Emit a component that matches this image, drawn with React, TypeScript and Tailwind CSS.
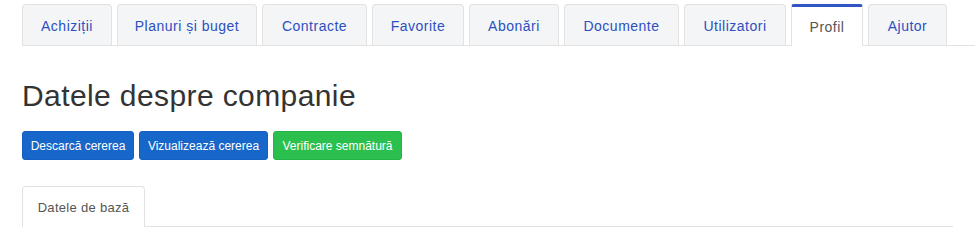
const tabs = [
  { label: "Achiziții", width: "w-[90px]" },
  { label: "Planuri și buget", width: "w-[140px]" },
  { label: "Contracte", width: "w-[105px]" },
  { label: "Favorite", width: "w-[92px]" },
  { label: "Abonări", width: "w-[90px]" },
  { label: "Documente", width: "w-[115px]" },
  { label: "Utilizatori", width: "w-[102px]" },
  { label: "Profil", width: "w-[72px]", active: true },
  { label: "Ajutor", width: "w-[79px]" },
];

export default function App() {
  return (
    <div className="h-[248px] w-[975px] overflow-hidden bg-white font-['Liberation_Sans',Arial,sans-serif]">
      <nav className="ml-[22px] mt-1 flex h-[42px] gap-[5px] border-b border-[#e2e2e2]">
        {tabs.map((tab) =>
          tab.active ? (
            <div
              key={tab.label}
              className={`${tab.width} -mb-px flex items-center justify-center rounded-t-[3px] border-x border-t-[3px] border-x-[#e2e2e2] border-t-[#3155c4] bg-white pt-[1px] text-[14px] tracking-[0.5px] text-[#555]`}
            >
              {tab.label}
            </div>
          ) : (
            <div
              key={tab.label}
              className={`${tab.width} flex items-center justify-center rounded-t-[4px] border-x border-t border-[#e2e2e2] bg-[#f4f5f7] pt-[2px] text-[14px] tracking-[0.5px] text-[#2c4fc1]`}
            >
              {tab.label}
            </div>
          )
        )}
      </nav>

      <div className="px-[22px]">
        <h1 className="mt-[32px] text-[30px] leading-[35px] tracking-[0.4px] text-[#333]">
          Datele despre companie
        </h1>

        <div className="mt-[18px] flex gap-[5px]">
          <button className="h-[29px] w-[112px] rounded-[3px] border border-[#1360c0] bg-[#1766c9] text-[12px] text-white">
            Descarcă cererea
          </button>
          <button className="h-[29px] w-[129px] rounded-[3px] border border-[#1360c0] bg-[#1766c9] text-[12px] text-white">
            Vizualizează cererea
          </button>
          <button className="h-[29px] w-[129px] rounded-[3px] border border-[#25b347] bg-[#2bbf4e] text-[12px] text-white">
            Verificare semnătură
          </button>
        </div>

        <div className="mt-[26px] flex h-[41px] border-b border-[#e2e2e2]">
          <div className="-mb-px flex w-[123px] items-center justify-center rounded-t-[4px] border-x border-t border-[#e2e2e2] bg-white pt-[1px] text-[13px] tracking-[0.3px] text-[#555]">
            Datele de bază
          </div>
        </div>
      </div>
    </div>
  );
}
